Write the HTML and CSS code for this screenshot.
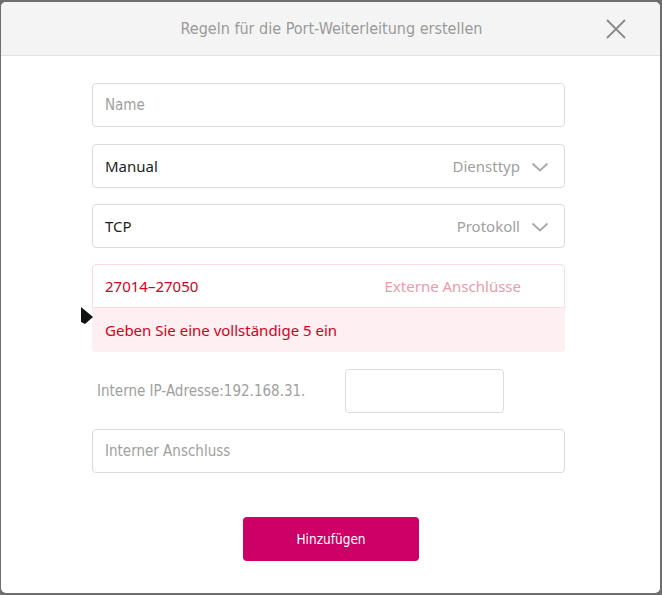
FILE: index.html
```html
<!DOCTYPE html>
<html lang="de">
<head>
<meta charset="utf-8">
<title>Port-Weiterleitung</title>
<link rel="stylesheet" href="styles.css">
</head>
<body>
<div class="backdrop">
  <div class="dialog">
    <div class="header">
      <h1 class="title">Regeln für die Port-Weiterleitung erstellen</h1>
      <button class="close" aria-label="Schließen">
        <svg width="20" height="20" viewBox="0 0 20 20"><path d="M1 1 L19 19 M19 1 L1 19" stroke="#8a8a8a" stroke-width="1.8" fill="none"/></svg>
      </button>
    </div>
    <div class="body">
      <div class="field first"><span class="placeholder cond">Name</span></div>
      <div class="field select">
        <span class="value">Manual</span>
        <span class="right"><span class="label">Diensttyp</span>
          <svg class="chev" width="18" height="10" viewBox="0 0 18 10"><path d="M1.5 1.5 L9 8.5 L16.5 1.5" stroke="#a8a8a8" stroke-width="1.8" fill="none"/></svg></span>
      </div>
      <div class="field select">
        <span class="value">TCP</span>
        <span class="right"><span class="label">Protokoll</span>
          <svg class="chev" width="18" height="10" viewBox="0 0 18 10"><path d="M1.5 1.5 L9 8.5 L16.5 1.5" stroke="#a8a8a8" stroke-width="1.8" fill="none"/></svg></span>
      </div>
      <div class="error-group">
        <div class="field error">
          <span class="value err">27014–27050</span>
          <span class="label err-label">Externe Anschlüsse</span>
        </div>
        <div class="error-msg">Geben Sie eine vollständige 5 ein</div>
      </div>
      <div class="ip-row">
        <span class="ip-label cond">Interne IP-Adresse:192.168.31.</span>
        <div class="ip-box"></div>
      </div>
      <div class="field"><span class="placeholder cond">Interner Anschluss</span></div>
      <div class="actions">
        <button class="btn cond">Hinzufügen</button>
      </div>
    </div>
    <svg class="cursor" width="14" height="18" viewBox="0 0 14 18"><path d="M1 0 L13 10 L5 17 L1 15 Z" fill="#111"/></svg>
  </div>
</div>
</body>
</html>
```
FILE: styles.css
```css
* { box-sizing: border-box; }
html, body { margin: 0; padding: 0; }
body {
  width: 662px;
  height: 595px;
  background: #6e6e6e;
  font-family: "Noto Sans", "DejaVu Sans", sans-serif;
  overflow: hidden;
}
.backdrop {
  padding: 2px 2px 2px 1px;
  height: 595px;
}
.dialog {
  position: relative;
  height: 591px;
  background: #fff;
  border-radius: 5px;
  overflow: hidden;
  display: flex;
  flex-direction: column;
}
.header {
  height: 54px;
  background: #f4f4f4;
  border-bottom: 1px solid #e2e2e2;
  display: flex;
  align-items: center;
  justify-content: center;
  position: relative;
}
.title {
  margin: 0;
  font-family: "DejaVu Sans", sans-serif;
  font-stretch: condensed;
  font-weight: 400;
  font-size: 16px;
  color: #9a9a9a;
  padding-left: 2px;
}
.close {
  position: absolute;
  right: 34px;
  top: 17px;
  background: none;
  border: 0;
  padding: 0;
  width: 20px;
  height: 20px;
  display: block;
}
.close svg { display: block; }
.body {
  padding: 27px 95px 0 91px;
  display: flex;
  flex-direction: column;
  gap: 16px;
}
.field {
  height: 44px;
  border: 1px solid #dcdcdc;
  border-radius: 4px;
  display: flex;
  align-items: center;
  justify-content: space-between;
  padding: 0 43px 0 12px;
  font-size: 15px;
}
.field.first { margin-bottom: 1px; }
.cond {
  font-family: "DejaVu Sans", sans-serif;
  font-stretch: condensed;
}
.placeholder { color: #a0a0a0; font-size: 15px; }
.value { color: #1e1e1e; }
.select { padding-right: 15px; }
.right { display: flex; align-items: center; gap: 11px; }
.label { color: #a0a0a0; }
.chev { display: block; margin-top: 2px; }
.error-group { display: flex; flex-direction: column; }
.field.error {
  border-color: #fbdce3;
  border-radius: 4px 4px 0 0;
  height: 44px;
}
.err { color: #d0021b; }
.err-label { color: #ec9aa9; }
.error-msg {
  height: 44px;
  background: #fdeff2;
  border-radius: 0 0 4px 4px;
  color: #d0021b;
  font-size: 15px;
  display: flex;
  align-items: center;
  padding-left: 13px;
}
.ip-row {
  display: flex;
  align-items: center;
  height: 44px;
  margin-top: 1px;
}
.ip-label {
  color: #a0a0a0;
  font-size: 15px;
  width: 253px;
  padding-left: 5px;
}
.ip-box {
  width: 159px;
  height: 44px;
  border: 1px solid #dcdcdc;
  border-radius: 4px;
}
.actions {
  display: flex;
  justify-content: center;
  margin-top: 28px;
  padding-left: 5px;
}
.btn {
  width: 176px;
  height: 44px;
  background: #cc0066;
  color: #fff;
  border: 0;
  border-radius: 4px;
  font-size: 13.5px;
}
.cursor {
  position: absolute;
  left: 79px;
  top: 305px;
}
```
